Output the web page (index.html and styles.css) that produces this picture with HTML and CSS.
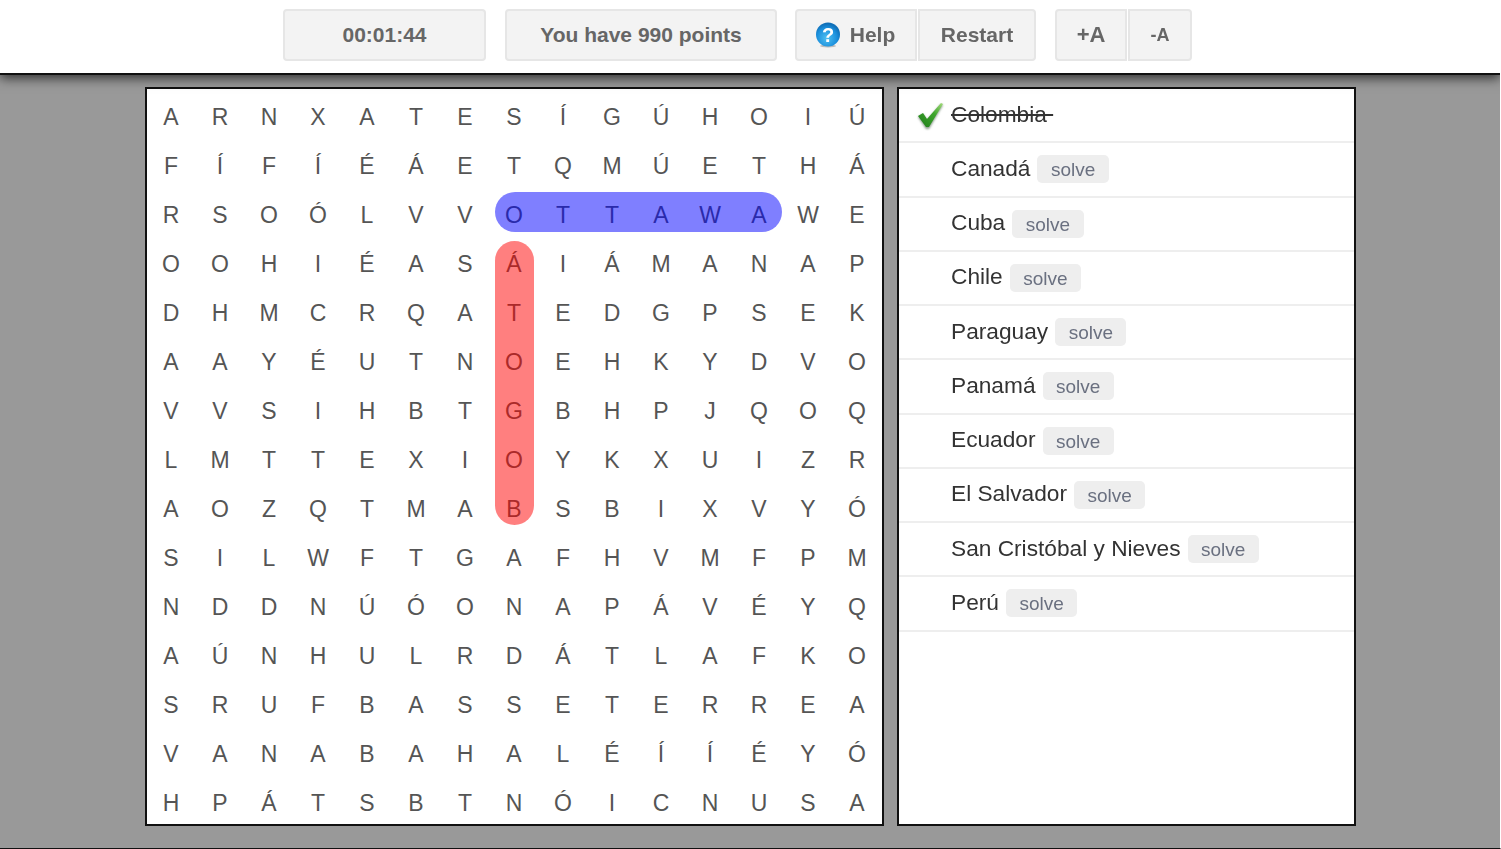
FILE: index.html
```html
<!DOCTYPE html>
<html>
<head>
    <meta charset="utf-8" />
    <meta name="viewport" content="width=device-width, initial-scale=1.0" />
    <title>Word Search</title>
    <link rel="stylesheet" href="styles.css">
</head>
<body>
    <header class="topbar">
        <div class="btn btn-timer">00:01:44</div>
        <div class="btn btn-points">You have 990 points</div>
        <div class="btn-group group-game">
            <button class="btn btn-help">
                <svg class="help-icon" viewBox="0 0 26 26" width="26" height="26">
                    <defs>
                        <radialGradient id="helpBlue" cx="45%" cy="65%" r="60%">
                            <stop offset="0" stop-color="#4fc0f2" />
                            <stop offset="0.7" stop-color="#1b8fdc" />
                            <stop offset="1" stop-color="#0f6fb8" />
                        </radialGradient>
                    </defs>
                    <ellipse cx="13" cy="24" rx="8" ry="1.5" fill="#bbb" />
                    <circle cx="13" cy="12.5" r="12" fill="url(#helpBlue)" />
                    <text x="13" y="20" text-anchor="middle" class="help-mark">?</text>
                </svg>
                Help
            </button>
            <button class="btn btn-restart">Restart</button>
        </div>
        <div class="btn-group group-font">
            <button class="btn btn-bigger">+A</button>
            <button class="btn btn-smaller">-A</button>
        </div>
    </header>

    <main class="board">
        <section class="panel grid-panel">
            <div class="mark mark-ottawa"></div>
            <div class="mark mark-togo"></div>
            <div class="letters">
                <span>A</span><span>R</span><span>N</span><span>X</span><span>A</span><span>T</span><span>E</span><span>S</span><span>Í</span><span>G</span><span>Ú</span><span>H</span><span>O</span><span>I</span><span>Ú</span>
                <span>F</span><span>Í</span><span>F</span><span>Í</span><span>É</span><span>Á</span><span>E</span><span>T</span><span>Q</span><span>M</span><span>Ú</span><span>E</span><span>T</span><span>H</span><span>Á</span>
                <span>R</span><span>S</span><span>O</span><span>Ó</span><span>L</span><span>V</span><span>V</span><span>O</span><span>T</span><span>T</span><span>A</span><span>W</span><span>A</span><span>W</span><span>E</span>
                <span>O</span><span>O</span><span>H</span><span>I</span><span>É</span><span>A</span><span>S</span><span>Á</span><span>I</span><span>Á</span><span>M</span><span>A</span><span>N</span><span>A</span><span>P</span>
                <span>D</span><span>H</span><span>M</span><span>C</span><span>R</span><span>Q</span><span>A</span><span>T</span><span>E</span><span>D</span><span>G</span><span>P</span><span>S</span><span>E</span><span>K</span>
                <span>A</span><span>A</span><span>Y</span><span>É</span><span>U</span><span>T</span><span>N</span><span>O</span><span>E</span><span>H</span><span>K</span><span>Y</span><span>D</span><span>V</span><span>O</span>
                <span>V</span><span>V</span><span>S</span><span>I</span><span>H</span><span>B</span><span>T</span><span>G</span><span>B</span><span>H</span><span>P</span><span>J</span><span>Q</span><span>O</span><span>Q</span>
                <span>L</span><span>M</span><span>T</span><span>T</span><span>E</span><span>X</span><span>I</span><span>O</span><span>Y</span><span>K</span><span>X</span><span>U</span><span>I</span><span>Z</span><span>R</span>
                <span>A</span><span>O</span><span>Z</span><span>Q</span><span>T</span><span>M</span><span>A</span><span>B</span><span>S</span><span>B</span><span>I</span><span>X</span><span>V</span><span>Y</span><span>Ó</span>
                <span>S</span><span>I</span><span>L</span><span>W</span><span>F</span><span>T</span><span>G</span><span>A</span><span>F</span><span>H</span><span>V</span><span>M</span><span>F</span><span>P</span><span>M</span>
                <span>N</span><span>D</span><span>D</span><span>N</span><span>Ú</span><span>Ó</span><span>O</span><span>N</span><span>A</span><span>P</span><span>Á</span><span>V</span><span>É</span><span>Y</span><span>Q</span>
                <span>A</span><span>Ú</span><span>N</span><span>H</span><span>U</span><span>L</span><span>R</span><span>D</span><span>Á</span><span>T</span><span>L</span><span>A</span><span>F</span><span>K</span><span>O</span>
                <span>S</span><span>R</span><span>U</span><span>F</span><span>B</span><span>A</span><span>S</span><span>S</span><span>E</span><span>T</span><span>E</span><span>R</span><span>R</span><span>E</span><span>A</span>
                <span>V</span><span>A</span><span>N</span><span>A</span><span>B</span><span>A</span><span>H</span><span>A</span><span>L</span><span>É</span><span>Í</span><span>Í</span><span>É</span><span>Y</span><span>Ó</span>
                <span>H</span><span>P</span><span>Á</span><span>T</span><span>S</span><span>B</span><span>T</span><span>N</span><span>Ó</span><span>I</span><span>C</span><span>N</span><span>U</span><span>S</span><span>A</span>
            </div>
        </section>

        <section class="panel word-panel">
            <ul class="words">
                <li class="found">
                    <svg class="check" viewBox="0 0 30 30" width="30" height="30">
                        <defs>
                            <linearGradient id="checkGreen" x1="0" y1="1" x2="1" y2="0">
                                <stop offset="0" stop-color="#1f7d1a" />
                                <stop offset="0.6" stop-color="#3ea52c" />
                                <stop offset="1" stop-color="#a5dc7c" />
                            </linearGradient>
                            <filter id="checkBlur"><feGaussianBlur stdDeviation="0.9" /></filter>
                        </defs>
                        <polygon points="2,16 7,13 11,19 25,3 27,4 13,28 10,28" fill="#8a9a8a" filter="url(#checkBlur)" />
                        <polygon points="2,15 7,12 11,18 25,2 27,3 13,26 10,26" fill="url(#checkGreen)" />
                    </svg>
                    <span class="word">Colombia&nbsp;</span>
                </li>
                <li><span class="word">Canadá</span><span class="solve">solve</span></li>
                <li><span class="word">Cuba</span><span class="solve">solve</span></li>
                <li><span class="word">Chile</span><span class="solve">solve</span></li>
                <li><span class="word">Paraguay</span><span class="solve">solve</span></li>
                <li><span class="word">Panamá</span><span class="solve">solve</span></li>
                <li><span class="word">Ecuador</span><span class="solve">solve</span></li>
                <li><span class="word">El Salvador</span><span class="solve">solve</span></li>
                <li><span class="word">San Cristóbal y Nieves</span><span class="solve">solve</span></li>
                <li><span class="word">Perú</span><span class="solve">solve</span></li>
            </ul>
        </section>
    </main>
</body>
</html>
```

FILE: styles.css
```css
* {
    box-sizing: border-box;
}
html, body {
    height: 100%;
}
body {
    margin: 0;
    background: #999;
    font-family: "Liberation Sans", Arial, sans-serif;
    display: flex;
    flex-direction: column;
    overflow: hidden;
    border-bottom: 1px solid #111;
    border-right: 1px solid #fff;
}
.topbar {
    height: 75px;
    flex: none;
    display: flex;
    align-items: flex-start;
    padding: 9px 0 0 283px;
    background: #fff;
    border-bottom: 2px solid #111;
    box-shadow: 0 3px 11px rgba(0,0,0,0.7);
    position: relative;
    z-index: 1;
    filter: blur(0.4px);
}
.btn {
    height: 52px;
    display: flex;
    align-items: center;
    justify-content: center;
    background: #f3f3f3;
    border: 2px solid #e6e6e6;
    border-radius: 4px;
    color: #666;
    font-family: inherit;
    font-size: 21px;
    font-weight: bold;
}
.btn-timer {
    width: 203px;
    margin-right: 19px;
}
.btn-points {
    width: 272px;
    margin-right: 18px;
}
.btn-group {
    display: flex;
    gap: 1px;
    margin-right: 19px;
}
.btn-help {
    width: 122px;
    gap: 9px;
    padding-right: 8px;
    border-radius: 4px 0 0 4px;
}
.btn-restart {
    width: 118px;
    border-radius: 0 4px 4px 0;
}
.btn-bigger {
    width: 72px;
    font-size: 22px;
    border-radius: 4px 0 0 4px;
}
.btn-smaller {
    width: 64px;
    padding-top: 2px;
    font-size: 18px;
    border-radius: 0 4px 4px 0;
}
.help-mark {
    fill: #fff;
    font-family: "Liberation Sans", Arial, sans-serif;
    font-size: 20px;
    font-weight: bold;
}
.board {
    flex: 1;
    display: flex;
    gap: 13px;
    padding: 12px 0 0 145px;
    filter: blur(0.4px);
}
.panel {
    height: 739px;
    background: #fff;
    border: 2px solid #111;
    position: relative;
}
.grid-panel {
    width: 739px;
}
.word-panel {
    width: 459px;
}
.letters {
    display: grid;
    grid-template-columns: repeat(15, 49px);
    grid-auto-rows: 49px;
}
.letters span {
    display: flex;
    align-items: center;
    justify-content: center;
    padding: 8px 1px 0 0;
    font-size: 23px;
    color: #555;
}
.mark {
    position: absolute;
    border-radius: 20px;
}
.mark-ottawa {
    left: 348px;
    top: 103px;
    width: 287px;
    height: 40px;
    background: rgba(0,0,255,0.5);
}
.mark-togo {
    left: 348px;
    top: 152px;
    width: 39px;
    height: 284px;
    background: rgba(255,0,0,0.5);
}
.words {
    list-style: none;
    margin: 0;
    padding: 0;
}
.words li {
    height: 54.25px;
    display: flex;
    align-items: center;
    gap: 7px;
    padding-left: 52px;
    border-bottom: 2px solid #eee;
    position: relative;
}
.word {
    padding-bottom: 2px;
    font-size: 22.7px;
    color: #333;
}
.found .word {
    text-decoration: line-through;
}
.check {
    position: absolute;
    left: 17px;
    top: 12px;
}
.solve {
    padding: 0 13.5px;
    height: 28px;
    line-height: 29px;
    background: #eee;
    border-radius: 5px;
    font-size: 19px;
    color: #6a7080;
}
```
